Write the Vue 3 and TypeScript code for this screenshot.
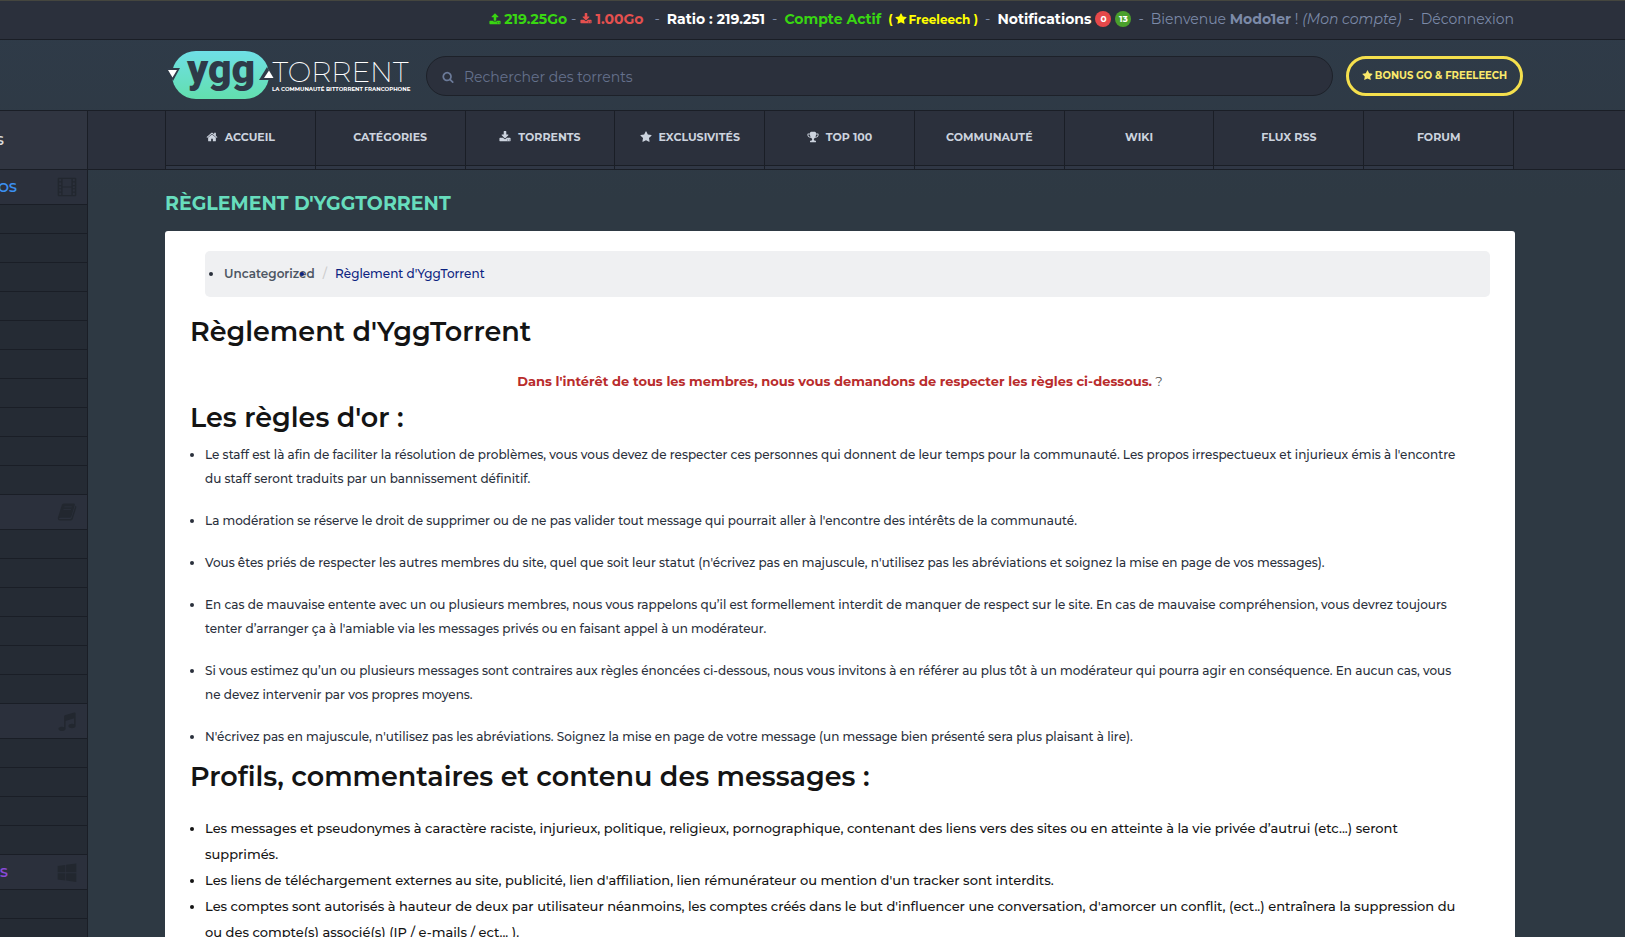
<script setup lang="ts">
interface NavItem {
  label: string
  icon?: string
}
interface Category {
  name: string
  tone: string
  icon: string
  rows: number
}

const icons: Record<string, string> = {
  star: 'M1728 647q0 22-26 48l-363 354 86 500q1 7 1 20 0 21-10.5 35.5t-30.5 14.5q-19 0-40-12l-449-236-449 236q-22 12-40 12-21 0-31.5-14.5t-10.5-35.5q0-6 2-20l86-500-364-354q-25-27-25-48 0-37 56-46l502-73 225-455q19-41 49-41t49 41l225 455 502 73q56 9 56 46z',
  search: 'M1216 832q0-185-131.500-316.500t-316.500-131.500-316.500 131.500-131.500 316.500 131.500 316.500 316.500 131.500 316.500-131.500 131.500-316.500zm512 832q0 52-38 90t-90 38q-54 0-90-38l-343-342q-179 124-399 124-143 0-273.500-55.500t-225-150-150-225-55.500-273.500 55.500-273.500 150-225 225-150 273.500-55.500 273.500 55.500 225 150 150 225 55.500 273.500q0 220-124 399l343 343q37 37 37 90z',
  home: 'M1472 992v480q0 26-19 45t-45 19h-384v-384h-256v384h-384q-26 0-45-19t-19-45v-480q0-1 .5-3t.5-3l575-474 575 474q1 2 1 6zm223-69l-62 74q-8 9-21 11h-3q-13 0-21-7l-692-577-692 577q-12 8-24 7-13-2-21-11l-62-74q-8-10-7-23.500t11-21.500l719-599q32-26 76-26t76 26l244 204v-195q0-14 9-23t23-9h192q14 0 23 9t9 23v408l219 182q10 8 11 21.500t-7 23.500z',
  download: 'M1344 1344q0-26-19-45t-45-19-45 19-19 45 19 45 45 19 45-19 19-45zm256 0q0-26-19-45t-45-19-45 19-19 45 19 45 45 19 45-19 19-45zm128-224v320q0 40-28 68t-68 28h-1472q-40 0-68-28t-28-68v-320q0-40 28-68t68-28h465l135 136q58 56 136 56t136-56l136-136h464q40 0 68 28t28 68zm-325-569q17 41-14 70l-448 448q-18 19-45 19t-45-19l-448-448q-31-29-14-70 17-39 59-39h256v-448q0-26 19-45t45-19h256q26 0 45 19t19 45v448h256q42 0 59 39z',
  upload: 'M1344 1472q0-26-19-45t-45-19-45 19-19 45 19 45 45 19 45-19 19-45zm256 0q0-26-19-45t-45-19-45 19-19 45 19 45 45 19 45-19 19-45zm128-224v320q0 40-28 68t-68 28h-1472q-40 0-68-28t-28-68v-320q0-40 28-68t68-28h427q21 56 70.500 92t110.500 36h256q61 0 110.500-36t70.500-92h427q40 0 68 28t28 68zm-325-648q-17 40-59 40h-256v448q0 26-19 45t-45 19h-256q-26 0-45-19t-19-45v-448h-256q-42 0-59-40-17-39 14-69l448-448q18-19 45-19t45 19l448 448q31 30 14 69z',
  trophy: 'M522 883q-74-162-74-371h-256v96q0 78 94.500 162t235.500 113zm1078-275v-96h-256q0 209-74 371 141-29 235.500-113t94.500-162zm128-128v128q0 71-41.500 143t-112 130-173 97.500-215.500 44.500q-42 54-95 95-38 34-52.500 72.500t-14.500 89.500q0 54 30.500 91t97.500 37q75 0 133.500 45.500t58.500 114.500v64q0 14-9 23t-23 9h-832q-14 0-23-9t-9-23v-64q0-69 58.500-114.500t133.500-45.500q67 0 97.500-37t30.500-91q0-51-14.500-89.500t-52.500-72.500q-53-41-95-95-113-5-215.500-44.500t-173-97.500-112-130-41.500-143v-128q0-40 28-68t68-28h288v-96q0-66 47-113t113-47h576q66 0 113 47t47 113v96h288q40 0 68 28t28 68z',
  music: 'M1664 224v1120q0 50-34 89t-86 60.500-103.500 32-96.500 10.500-96.500-10.500-103.500-32-86-60.500-34-89 34-89 86-60.500 103.500-32 96.500-10.500q105 0 192 39v-537l-768 237v709q0 50-34 89t-86 60.500-103.500 32-96.500 10.500-96.500-10.500-103.500-32-86-60.500-34-89 34-89 86-60.500 103.500-32 96.500-10.500q105 0 192 39v-967q0-31 19-56.500t49-35.500l832-256q12-4 28-4 40 0 68 28t28 68z',
  film: 'M160 64H1632q96 0 96 96V1632q0 96-96 96H160q-96 0-96-96V160q0-96 96-96ZM190 180V390H380V180ZM190 500V710H380V500ZM190 820V1000H380V820ZM190 1100V1290H380V1100ZM190 1400V1610H380V1400ZM500 180V840H1292V180ZM500 950V1610H1292V950ZM1412 180V390H1602V180ZM1412 500V710H1602V500ZM1412 820V1000H1602V820ZM1412 1100V1290H1602V1100ZM1412 1400V1610H1602V1400Z',
  book: 'M620 130H1500q130 20 90 160L1290 1290q-30 110-150 110H290q-110 10-110 70 0 50 80 50H1190q80 0 110-90L1650 330q110 50 70 190L1410 1530q-40 130-180 130H270Q60 1650 70 1440L440 250q50-110 180-120ZM660 400l-25 80H1310l25-80ZM590 620l-25 80H1240l25-80Z',
  windows: 'M746 1006v651l-682-94v-557zM746 263v659h-682v-565zM1728 1006v786l-907-125v-661zM1728 128v794h-907v-669z',
}

const navItems: NavItem[] = [
  { label: 'Accueil', icon: 'home' },
  { label: 'Catégories' },
  { label: 'Torrents', icon: 'download' },
  { label: 'Exclusivités', icon: 'star' },
  { label: 'Top 100', icon: 'trophy' },
  { label: 'Communauté' },
  { label: 'Wiki' },
  { label: 'Flux RSS' },
  { label: 'Forum' },
]

const categories: Category[] = [
  { name: 'OS', tone: 'blue', icon: 'film', rows: 10 },
  { name: '', tone: 'none', icon: 'book', rows: 6 },
  { name: '', tone: 'none', icon: 'music', rows: 4 },
  { name: 'S', tone: 'purple', icon: 'windows', rows: 2 },
]

const goldenRules: string[] = [
  "Le staff est là afin de faciliter la résolution de problèmes, vous vous devez de respecter ces personnes qui donnent de leur temps pour la communauté. Les propos irrespectueux et injurieux émis à l'encontre du staff seront traduits par un bannissement définitif.",
  "La modération se réserve le droit de supprimer ou de ne pas valider tout message qui pourrait aller à l'encontre des intérêts de la communauté.",
  "Vous êtes priés de respecter les autres membres du site, quel que soit leur statut (n'écrivez pas en majuscule, n'utilisez pas les abréviations et soignez la mise en page de vos messages).",
  "En cas de mauvaise entente avec un ou plusieurs membres, nous vous rappelons qu’il est formellement interdit de manquer de respect sur le site. En cas de mauvaise compréhension, vous devrez toujours tenter d’arranger ça à l'amiable via les messages privés ou en faisant appel à un modérateur.",
  "Si vous estimez qu’un ou plusieurs messages sont contraires aux règles énoncées ci-dessous, nous vous invitons à en référer au plus tôt à un modérateur qui pourra agir en conséquence. En aucun cas, vous ne devez intervenir par vos propres moyens.",
  "N'écrivez pas en majuscule, n'utilisez pas les abréviations. Soignez la mise en page de votre message (un message bien présenté sera plus plaisant à lire).",
]

const profileRules: string[] = [
  'Les messages et pseudonymes à caractère raciste, injurieux, politique, religieux, pornographique, contenant des liens vers des sites ou en atteinte à la vie privée d’autrui (etc...) seront supprimés.',
  "Les liens de téléchargement externes au site, publicité, lien d'affiliation, lien rémunérateur ou mention d'un tracker sont interdits.",
  "Les comptes sont autorisés à hauteur de deux par utilisateur néanmoins, les comptes créés dans le but d'influencer une conversation, d'amorcer un conflit, (ect..) entraînera la suppression du ou des compte(s) associé(s) (IP / e-mails / ect... ).",
]
</script>

<template>
  <div class="page">
    <div class="topbar">
      <span class="stat up">
        <svg class="ico" viewBox="0 0 1792 1792"><path :d="icons.upload" /></svg>219.25Go
      </span>
      <span class="dash tight">-</span>
      <span class="stat down">
        <svg class="ico" viewBox="0 0 1792 1792"><path :d="icons.download" /></svg>1.00Go
      </span>
      <span class="dash wide">-</span>
      <strong class="white">Ratio : 219.251</strong>
      <span class="dash">-</span>
      <strong class="active">Compte Actif</strong>
      <strong class="free">(<svg class="ico" viewBox="0 0 1792 1792"><path :d="icons.star" /></svg>Freeleech )</strong>
      <span class="dash">-</span>
      <a class="notif" href="#">
        <strong>Notifications</strong>
        <span class="badge red">0</span>
        <span class="badge green">13</span>
      </a>
      <span class="dash">-</span>
      <span class="welcome">Bienvenue <strong>Modo1er</strong> ! <a href="#"><em>(Mon compte)</em></a></span>
      <span class="dash">-</span>
      <a href="#" class="logout">Déconnexion</a>
    </div>

    <header class="header">
      <a class="logo" href="#" aria-label="YggTorrent">
        <svg viewBox="0 0 492 100" width="246" height="50">
          <defs>
            <linearGradient id="pill" x1="0" y1="0" x2="0" y2="1">
              <stop offset="0" stop-color="#6fdfe6" />
              <stop offset="1" stop-color="#62dfae" />
            </linearGradient>
          </defs>
          <rect x="10" y="2" width="194" height="96" rx="48" fill="url(#pill)" />
          <text x="108" y="66" text-anchor="middle" class="logo-ygg">ygg</text>
          <path d="M-2 36h28l-14 26z" fill="#303b49" />
          <path d="M2 40h18l-9 15z" fill="#fff" />
          <path d="M184 60h30l-14-26z" fill="#303b49" />
          <path d="M194 56h19l-9-15z" fill="#fff" />
          <text x="211" y="63" class="logo-name">TORRENT</text>
          <text x="210" y="82" class="logo-tag">LA COMMUNAUTÉ BITTORRENT FRANCOPHONE</text>
        </svg>
      </a>
      <form class="search" role="search" @submit.prevent>
        <svg class="ico" viewBox="0 0 1792 1792"><path :d="icons.search" /></svg>
        <input type="search" aria-label="Rechercher des torrents" placeholder="Rechercher des torrents" />
      </form>
      <button class="bonus" type="button">
        <svg class="ico" viewBox="0 0 1792 1792"><path :d="icons.star" /></svg>BONUS GO &amp; FREELEECH
      </button>
    </header>

    <div class="body">
      <aside class="sidebar">
        <div class="side-head"><span class="cut">S</span></div>
        <template v-for="(cat, c) in categories" :key="c">
          <div class="side-cat">
            <span class="cut" :class="cat.tone">{{ cat.name }}</span>
            <svg viewBox="0 0 1792 1792"><path :d="icons[cat.icon]" fill-rule="evenodd" /></svg>
          </div>
          <div v-for="r in cat.rows" :key="c + '-' + r" class="side-row"></div>
        </template>
      </aside>

      <div class="content">
        <nav class="nav">
          <div class="nav-list">
            <a v-for="item in navItems" :key="item.label" href="#">
              <span class="cell">
                <svg v-if="item.icon" class="ico" viewBox="0 0 1792 1792"><path :d="icons[item.icon]" /></svg>{{ item.label }}
              </span>
            </a>
          </div>
        </nav>

        <main class="main">
          <h2 class="page-title">Règlement d'YggTorrent</h2>
          <article class="panel">
            <ol class="crumbs">
              <li><a href="#">Uncategorized</a></li>
              <li class="current">Règlement d'YggTorrent</li>
            </ol>
            <h1>Règlement d'YggTorrent</h1>
            <p class="notice">
              <strong>Dans l'intérêt de tous les membres, nous vous demandons de respecter les règles ci-dessous.</strong> ?
            </p>
            <h1>Les règles d'or :</h1>
            <ul class="rules">
              <li v-for="(rule, i) in goldenRules" :key="i">{{ rule }}</li>
            </ul>
            <h1 class="profiles">Profils, commentaires et contenu des messages :</h1>
            <ul class="rules dense">
              <li v-for="(rule, i) in profileRules" :key="i">{{ rule }}</li>
            </ul>
          </article>
        </main>
      </div>
    </div>
  </div>
</template>

<style>
html,
body,
#app {
  height: 100%;
  margin: 0;
}
body {
  overflow: hidden;
}
</style>

<style scoped>
* {
  box-sizing: border-box;
}
.page {
  height: 100%;
  display: flex;
  flex-direction: column;
  overflow: hidden;
  font-family: Montserrat, Inter, "Open Sans", sans-serif;
  font-size: 13px;
  background: linear-gradient(#2f3b49, #2e3943 200px);
  color: #7c8aa8;
}
a {
  color: inherit;
  text-decoration: none;
}
.ico {
  width: 12px;
  height: 12px;
  fill: currentColor;
  flex: none;
}
.topbar {
  flex: none;
  height: 40px;
  display: flex;
  align-items: center;
  justify-content: flex-end;
  gap: 7px;
  padding: 0 111px 2px 20px;
  font-size: 14px;
  white-space: nowrap;
  background: #2b303c;
  border-top: 1px solid #45463f;
  border-bottom: 1px solid #1a1e26;
}
.stat {
  display: flex;
  align-items: center;
  gap: 3px;
  font-weight: 700;
}
.up,
.active {
  color: #39d612;
}
.down {
  color: #e5504f;
}
.tight {
  margin: 0 -3px;
}
.wide {
  margin-left: 4px;
}
.white,
.notif {
  color: #fff;
}
.free {
  display: flex;
  align-items: center;
  gap: 2px;
  font-size: 12px;
  color: #ffff00;
}
.notif {
  display: flex;
  align-items: center;
  gap: 4px;
}
.badge {
  width: 16px;
  height: 16px;
  border-radius: 50%;
  font-size: 9px;
  line-height: 16px;
  font-weight: 700;
  text-align: center;
}
.red {
  background: #e5484a;
}
.green {
  background: #4aa02c;
}
.header {
  flex: none;
  height: 70px;
  display: flex;
  align-items: center;
  padding: 2px 102px 0 167px;
}
.logo {
  width: 246px;
  height: 52px;
  margin-right: 13px;
}
.logo svg {
  display: block;
}
.logo-ygg {
  font-family: Roboto, sans-serif;
  font-size: 82px;
  font-weight: 900;
  fill: #2e3a48;
}
.logo-name {
  font-size: 56px;
  font-weight: 200;
  fill: #fff;
}
.logo-tag {
  font-size: 11px;
  font-weight: 700;
  fill: #fff;
}
.search {
  flex: 1;
  height: 40px;
  display: flex;
  align-items: center;
  gap: 8px;
  padding: 2px 15px 0;
  border: 1px solid #1d2129;
  border-radius: 20px;
  background: #2b303c;
  color: #6b7a99;
}
.search input {
  flex: 1;
  min-width: 0;
  padding: 0 2px;
  border: 0;
  outline: 0;
  background: none;
  color: inherit;
  font: inherit;
  font-size: 14px;
}
.search input::placeholder {
  color: #65718c;
}
.bonus {
  width: 177px;
  height: 40px;
  margin-left: 13px;
  display: flex;
  align-items: center;
  justify-content: center;
  gap: 2px;
  padding: 0 0 2px;
  border: 3px solid #f5e04d;
  border-radius: 20px;
  background: none;
  color: #fbe96b;
  font: inherit;
  font-size: 10px;
  font-weight: 700;
}
.bonus .ico {
  width: 11px;
  height: 11px;
}
.body {
  flex: 1;
  min-height: 0;
  display: grid;
  grid-template-columns: 88px minmax(0, 1fr);
}
.sidebar {
  overflow: hidden;
  border-right: 1px solid #1a1e26;
  background: #252b34;
}
.side-head {
  height: 60px;
  display: flex;
  align-items: center;
  border-top: 1px solid #1a1e26;
  border-bottom: 1px solid #1a1e26;
  background: #303541;
  color: #dcdcdc;
}
.cut {
  width: 17px;
  display: flex;
  justify-content: flex-end;
  overflow: hidden;
  font-weight: 600;
  font-size: 13px;
}
.side-head .cut {
  width: 4px;
}
.blue {
  color: #3b8ff0;
}
.purple {
  width: 8px;
  color: #8a4ad8;
}
.side-cat {
  height: 35px;
  display: flex;
  align-items: center;
  justify-content: space-between;
  padding: 0 10px 1px 0;
  border-bottom: 1px solid #1a1e26;
  background: #2b303c;
}
.side-cat svg {
  width: 20px;
  height: 20px;
  fill: #22272f;
}
.side-row {
  height: 29px;
  border-bottom: 1px solid #1a1e26;
}
.content {
  min-width: 0;
}
.nav {
  height: 60px;
  padding: 0 111px 0 77px;
  border-top: 1px solid #1a1e26;
  border-bottom: 1px solid #1a1e26;
  background: #2b303c;
}
.nav-list {
  display: flex;
  height: 100%;
  border-left: 1px solid #1a1e26;
}
.nav a {
  flex: 1;
  border-right: 1px solid #1a1e26;
  background: #303745;
  color: #ccd3de;
}
.cell {
  height: 55px;
  display: flex;
  align-items: center;
  justify-content: center;
  gap: 7px;
  padding-bottom: 2px;
  border-bottom: 1px solid #1a1e26;
  background: #2b303c;
  font-size: 11px;
  font-weight: 700;
  text-transform: uppercase;
}
.main {
  padding: 21px 110px 0 77px;
}
.page-title {
  margin: 0 0 14px;
  font-size: 19px;
  line-height: 26px;
  font-weight: 700;
  text-transform: uppercase;
  color: #67ddbd;
}
.panel {
  padding: 20px 25px;
  border-radius: 3px;
  background: #fff;
  color: #2a303c;
}
.crumbs {
  height: 46px;
  margin: 0 0 0 15px;
  padding: 0 0 1px 19px;
  display: flex;
  align-items: center;
  border-radius: 5px;
  background: #eff0f2;
  font-size: 12px;
}
.crumbs li {
  display: list-item;
  list-style: disc;
}
.crumbs a {
  font-weight: 600;
  color: #4d5663;
}
.crumbs .current {
  font-weight: 500;
  color: #0c2380;
}
.crumbs .current::before {
  content: "/";
  padding: 0 8px;
  color: #ccc;
}
h1 {
  margin: 0;
  font-size: 27px;
  line-height: 36px;
  font-weight: 600;
  color: #141414;
}
.crumbs + h1 {
  margin-top: 17px;
}
.notice {
  margin: 20px 0 8px;
  font-size: 13px;
  line-height: 22px;
  text-align: center;
  color: #555;
}
.notice strong {
  font-weight: 700;
  color: #b92c2c;
}
.rules {
  margin: 7px 0 0;
  padding: 0 24px 0 15px;
  font-size: 12px;
  line-height: 24px;
  font-weight: 500;
}
.rules li + li {
  margin-top: 18px;
}
.profiles {
  margin-top: 10px;
}
.dense {
  margin-top: 20px;
  font-size: 13px;
  line-height: 26px;
  color: #141414;
}
.dense li + li {
  margin-top: 0;
}
</style>
